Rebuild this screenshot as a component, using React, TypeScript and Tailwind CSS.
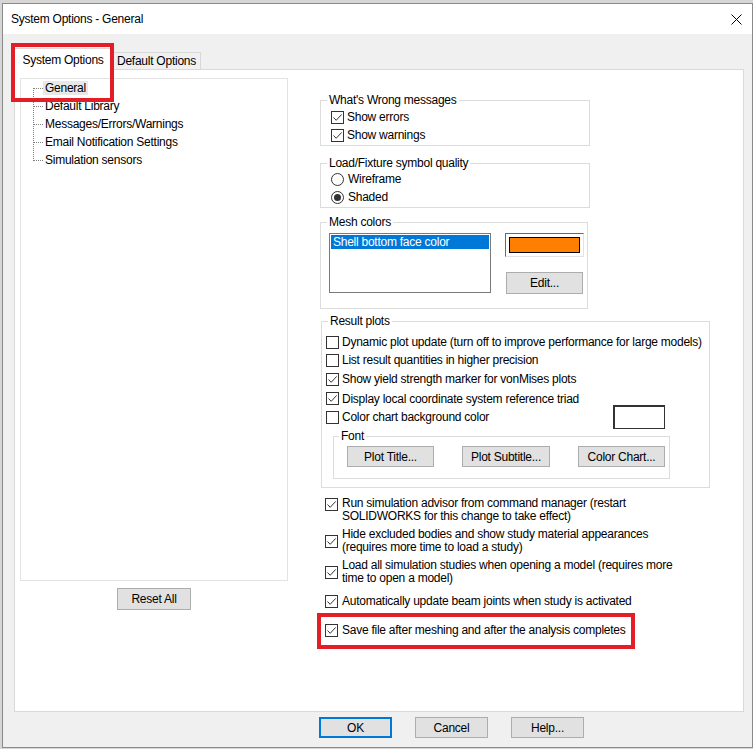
import type { ReactNode } from 'react';

const CheckBox = ({ checked = false }: { checked?: boolean }) => (
  <svg width="13" height="13" viewBox="0 0 13 13" className="shrink-0">
    <rect x="0.5" y="0.5" width="12" height="12" fill="#fff" stroke="#333" />
    {checked && <path d="M2.5 6.5 L5.2 9.3 L10.7 3.4" fill="none" stroke="#333" strokeWidth="1" />}
  </svg>
);

const Radio = ({ on = false }: { on?: boolean }) => (
  <svg width="13" height="13" viewBox="0 0 13 13" className="shrink-0">
    <circle cx="6.5" cy="6.5" r="6" fill="#fff" stroke="#333" />
    {on && <circle cx="6.5" cy="6.5" r="3.5" fill="#333" />}
  </svg>
);

const Btn = ({ children, className = '' }: { children: ReactNode; className?: string }) => (
  <button className={`flex items-center justify-center border border-[#adadad] bg-[#e1e1e1] text-[12px] leading-[14px] text-black ${className}`}>
    {children}
  </button>
);

const Group = ({ title, children, className = '' }: { title: string; children: ReactNode; className?: string }) => (
  <fieldset className={`min-w-0 border border-[#dcdcdc] ${className}`}>
    <legend className="ml-[6px] px-[2px] leading-[14px]">{title}</legend>
    {children}
  </fieldset>
);

const treeItems = ['General', 'Default Library', 'Messages/Errors/Warnings', 'Email Notification Settings', 'Simulation sensors'];

export default function App() {
  return (
    <div className="w-[753px] h-[749px] bg-[#d6d6d6] pt-[3px] pl-[2px] overflow-hidden font-['Liberation_Sans',Arial,sans-serif] text-[12px] leading-[14px] tracking-[-0.25px] text-black">
      <div className="relative w-[751px] h-[745px] border border-[#8a8a8a] bg-[#f0f0f0] flex flex-col">
        {/* title bar */}
        <div className="h-[30px] shrink-0 bg-white flex items-center justify-between pl-[8px] pr-[10px]">
          <span>System Options - General</span>
          <svg width="11" height="11" viewBox="0 0 11 11">
            <path d="M0.5 0.5 L10.5 10.5 M10.5 0.5 L0.5 10.5" stroke="#000" strokeWidth="1" />
          </svg>
        </div>

        {/* tabs */}
        <div className="flex items-end h-[35px] shrink-0 pl-[11px]">
          <div className="relative z-10 -mb-[1px] h-[22px] w-[98px] flex items-center justify-center bg-white border border-b-0 border-[#d9d9d9]">
            System Options
          </div>
          <div className="h-[17px] w-[89px] flex items-center justify-center border border-b-0 border-[#d9d9d9] bg-[#f0f0f0]">
            Default Options
          </div>
        </div>

        {/* tab page */}
        <div className="ml-[11px] w-[730px] h-[643px] shrink-0 border border-[#d9d9d9] bg-white flex pl-[5px]">
          {/* left: tree */}
          <div className="mt-[8px] flex flex-col">
            <div className="w-[268px] h-[503px] border border-[#e3e3e3] flex pl-[12px]">
              <svg width="10" height="90" viewBox="0 0 10 90" className="shrink-0">
                <path d="M0.5 9 V82" stroke="#808080" strokeDasharray="1 1" />
                {[9, 27, 45, 63, 81].map((y) => (
                  <path key={y} d={`M1 ${y + 0.5} H10`} stroke="#808080" strokeDasharray="1 1" />
                ))}
              </svg>
              <div className="flex flex-col">
                {treeItems.map((t, i) => (
                  <div key={t} className="h-[18px] flex items-center">
                    <span className={`h-[14px] px-[2px] ${i === 0 ? 'bg-[#e8e8e8]' : ''}`}>{t}</span>
                  </div>
                ))}
              </div>
            </div>
            <Btn className="mt-[7px] mx-auto w-[74px] h-[22px]">Reset All</Btn>
          </div>

          {/* right: options */}
          <div className="ml-[32px] mt-[23px] flex flex-col">
            <Group title="What's Wrong messages" className="w-[270px] pt-[1px] pb-[1px]">
              <div className="h-[18px] flex items-center pl-[10px] gap-[3px]"><CheckBox checked /><span>Show errors</span></div>
              <div className="h-[18px] flex items-center pl-[10px] gap-[3px]"><CheckBox checked /><span>Show warnings</span></div>
            </Group>

            <Group title="Load/Fixture symbol quality" className="mt-[10px] w-[270px] pb-[1px]">
              <div className="h-[18px] flex items-center pl-[10px] gap-[4px]"><Radio /><span>Wireframe</span></div>
              <div className="h-[18px] flex items-center pl-[10px] gap-[4px]"><Radio on /><span>Shaded</span></div>
            </Group>

            <Group title="Mesh colors" className="mt-[7px] w-[268px] pb-[14px]">
              <div className="flex pl-[8px] pt-[4px]">
                <div className="w-[162px] h-[60px] border border-[#7a7a7a] p-[1px]">
                  <div className="h-[14px] bg-[#0078d7] text-white pl-[2px]">Shell bottom face color</div>
                </div>
                <div className="ml-[14px] flex flex-col">
                  <div className="w-[79px] h-[24px] bg-white border border-t-[#696969] border-l-[#696969] border-r-[#e3e3e3] border-b-[#e3e3e3] p-[3px]">
                    <div className="w-full h-full bg-[#ff8000] border border-black" />
                  </div>
                  <Btn className="mt-[15px] ml-[1px] w-[77px] h-[22px]">Edit...</Btn>
                </div>
              </div>
            </Group>

            <Group title="Result plots" className="mt-[5px] ml-[1px] w-[389px] pt-[5px] pb-[8px]">
              <div className="h-[18px] flex items-center pl-[4px] gap-[3px] overflow-hidden whitespace-nowrap"><CheckBox /><span>Dynamic plot update (turn off to improve performance for large models)</span></div>
              <div className="h-[18px] flex items-center pl-[4px] gap-[3px] whitespace-nowrap"><CheckBox /><span>List result quantities in higher precision</span></div>
              <div className="h-[20px] flex items-center pl-[4px] gap-[3px] whitespace-nowrap"><CheckBox checked /><span>Show yield strength marker for vonMises plots</span></div>
              <div className="h-[19px] flex items-center pl-[4px] gap-[3px] whitespace-nowrap"><CheckBox checked /><span>Display local coordinate system reference triad</span></div>
              <div className="h-[18px] flex items-center pl-[4px] pr-[44px] gap-[3px] whitespace-nowrap">
                <CheckBox /><span>Color chart background color</span>
                <div className="ml-auto w-[52px] h-[24px] shrink-0 bg-white border-t-2 border-l-2 border-r border-b border-[#333]" />
              </div>
              <fieldset className="min-w-0 mt-[3px] ml-[11px] w-[337px] border border-[#dcdcdc] pt-[3px] pl-[13px] pb-[11px]">
                <legend className="ml-[-8px] px-[2px] leading-[14px]">Font</legend>
                <div className="flex gap-[28px]">
                  <Btn className="w-[87px] h-[21px]">Plot Title...</Btn>
                  <Btn className="w-[88px] h-[21px]">Plot Subtitle...</Btn>
                  <Btn className="w-[87px] h-[21px]">Color Chart...</Btn>
                </div>
              </fieldset>
            </Group>

            <div className="pl-[5px] flex flex-col leading-[13px]">
              <div className="mt-[9px] flex items-start gap-[4px]">
                <div className="mt-[1px]"><CheckBox checked /></div>
                <div className="flex flex-col">
                  <span>Run simulation advisor from command manager (restart</span>
                  <span>SOLIDWORKS for this change to take effect)</span>
                </div>
              </div>
              <div className="mt-[5px] flex items-center gap-[4px]">
                <CheckBox checked />
                <div className="flex flex-col">
                  <span>Hide excluded bodies and show study material appearances</span>
                  <span>(requires more time to load a study)</span>
                </div>
              </div>
              <div className="mt-[5px] flex items-center gap-[4px]">
                <CheckBox checked />
                <div className="flex flex-col">
                  <span>Load all simulation studies when opening a model (requires more</span>
                  <span>time to open a model)</span>
                </div>
              </div>
              <div className="mt-[10px] h-[13px] flex items-center gap-[4px]">
                <CheckBox checked /><span>Automatically update beam joints when study is activated</span>
              </div>
              <div className="mt-[16px] h-[13px] flex items-center gap-[4px]">
                <CheckBox checked /><span>Save file after meshing and after the analysis completes</span>
              </div>
            </div>
          </div>
        </div>

        {/* dialog buttons */}
        <div className="mt-[5px] pl-[316px] flex gap-[23px]">
          <Btn className="w-[73px] h-[21px] !border-2 !border-[#0078d7]">OK</Btn>
          <Btn className="w-[73px] h-[21px]">Cancel</Btn>
          <Btn className="w-[73px] h-[21px]">Help...</Btn>
        </div>

        {/* red highlight frames */}
        <div className="absolute left-[8px] top-[39px] w-[103px] h-[59px] border-[4px] border-[#e41e26] z-20" />
        <div className="absolute left-[314px] top-[609px] w-[318px] h-[36px] border-[4px] border-[#e41e26] z-20" />
      </div>
    </div>
  );
}
